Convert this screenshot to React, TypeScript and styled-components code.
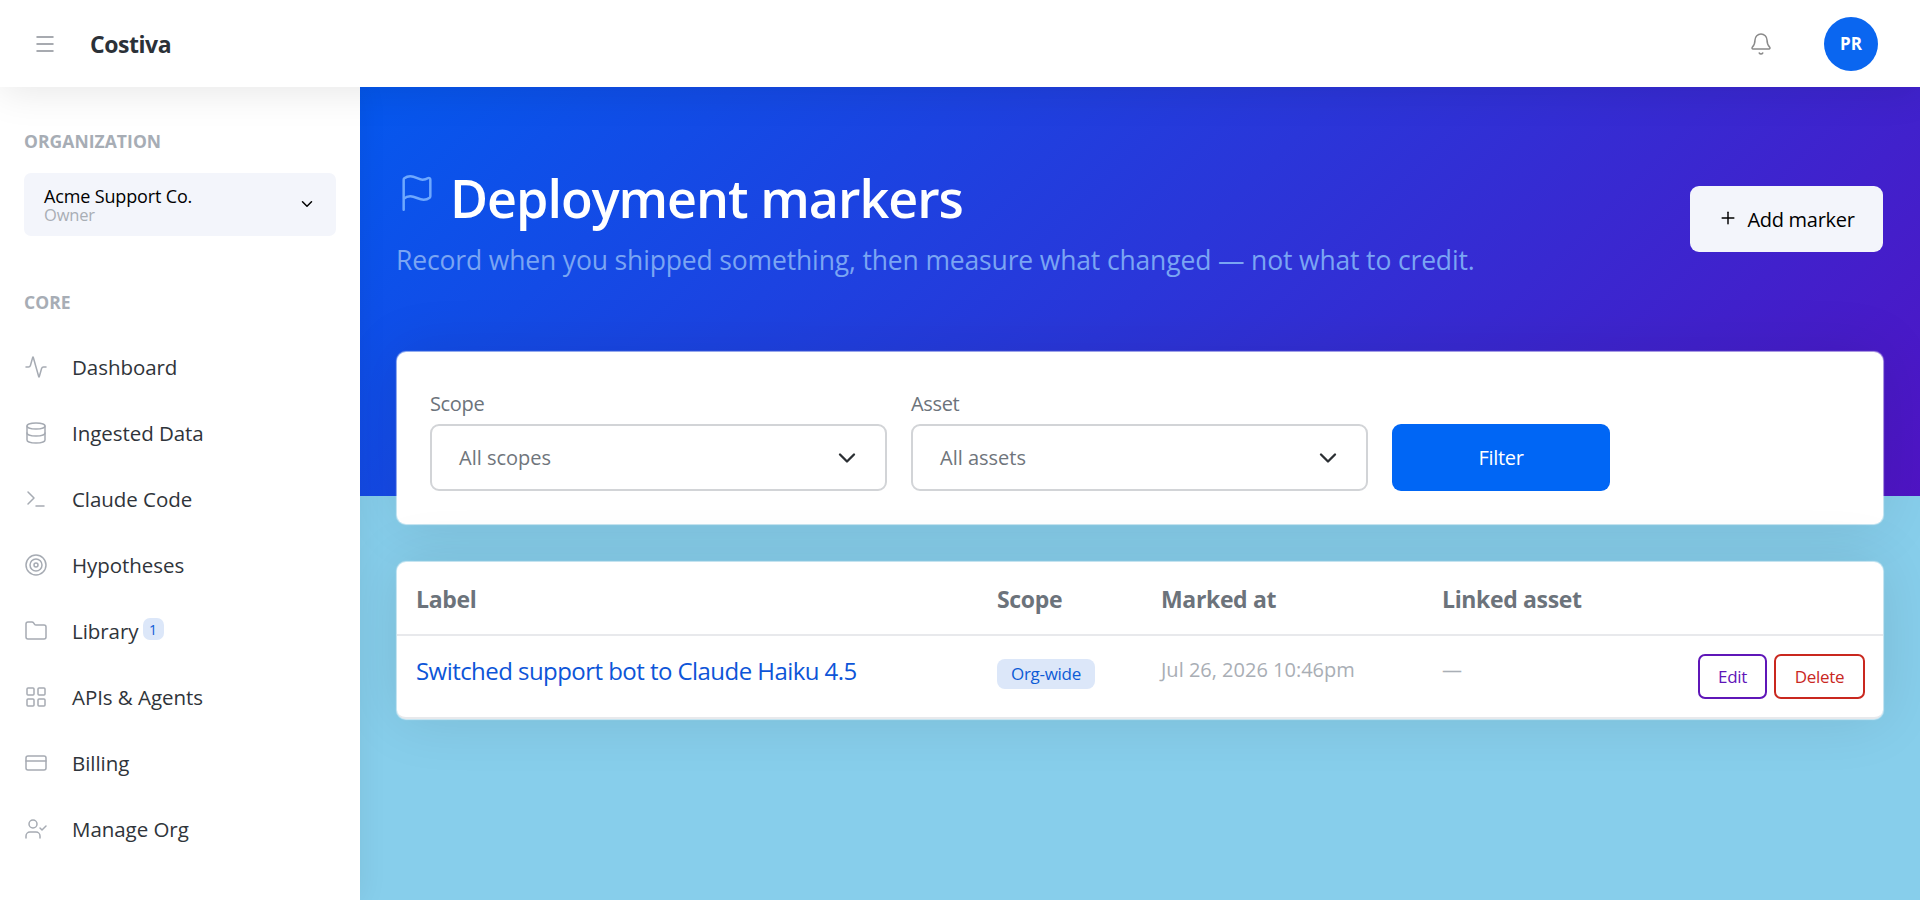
import React from "react";
import styled, { createGlobalStyle } from "styled-components";
import { Activity, Bell, ChevronDown, CreditCard, Database, Flag, Folder, LayoutGrid, Menu, Plus, Target, Terminal, UserCheck } from "lucide-react";

const Global = createGlobalStyle`
  html, body { margin: 0; padding: 0; height: 900px; overflow: hidden; background: #87ceeb; }
  * { box-sizing: border-box; }
  body { font-family: "Open Sans", "Noto Sans", sans-serif; color: #212529; }
`;

const Page = styled.div`display: flex; flex-direction: column; height: 900px;`;
const Topbar = styled.header`
  height: 87px; flex: none; background: #fff; display: flex; align-items: center;
  padding: 0 5px 0 33px; position: relative; z-index: 3;
  box-shadow: 0 4px 40px rgba(0,0,0,.1);
`;
const MenuButton = styled.span`display: flex; color: #8a8f96; width: 57px;`;
const Brand = styled.span`font-size: 23px; font-weight: 700; color: #2b3138; letter-spacing: -.45px; flex: 1;`;
const BellWrap = styled.span`display: flex; color: #8a8a8a; margin-right: 51px;`;
const Avatar = styled.span`
  width: 54px; height: 54px; border-radius: 50%; background: #0a66f0; color: #fff; margin-right: 37px;
  display: flex; align-items: center; justify-content: center; font-size: 17px; font-weight: 700;
`;
const Body = styled.div`display: flex; flex: 1; min-height: 0;`;
const Sidebar = styled.aside`
  width: 360px; flex: none; background: #fff; padding: 43px 24px 0; position: relative; z-index: 2;
  box-shadow: 0 0 28px rgba(0,0,0,.07);
`;
const SectionTitle = styled.div`
  font-size: 17.5px; font-weight: 700; color: #a7adb5; line-height: 22px; letter-spacing: .05px;
`;
const OrgBox = styled.div`
  margin-top: 21px; height: 63px; background: #f3f5fb; border-radius: 7px; padding: 15px 20px;
  display: flex; align-items: center; justify-content: space-between; margin-bottom: 55px;
`;
const OrgText = styled.div`display: flex; flex-direction: column; margin-top: 2px;`;
const OrgName = styled.span`font-size: 18px; font-weight: 500; color: #000; line-height: 19px; letter-spacing: -.15px;`;
const OrgRole = styled.span`font-size: 16.5px; color: #a9aeb5; line-height: 18px; letter-spacing: -.2px;`;
const OrgChevron = styled.span`display: flex; color: #000; margin-top: -2px;`;
const Nav = styled.nav`display: flex; flex-direction: column; margin-top: 21px;`;
const NavItem = styled.a`
  height: 66px; display: flex; align-items: center; color: #2f343a; font-size: 20.5px; letter-spacing: -.05px;
`;
const NavIcon = styled.span`display: flex; width: 48px; color: #a6abb3; flex: none;`;
const Badge = styled.span`
  width: 21px; height: 22px; margin: -4px 0 0 4px; border-radius: 7px; background: #dce7f9; color: #0d5bd6;
  display: flex; align-items: center; justify-content: center; font-size: 14px; letter-spacing: 0;
`;
const Main = styled.main`flex: 1; min-width: 0; display: flex; flex-direction: column; background: #87ceeb;`;
const Hero = styled.section`
  height: 409px; flex: none; background: linear-gradient(135deg, #0558ee 0%, #4f14c4 100%);
  display: flex; justify-content: space-between; padding: 76px 37px 0;
`;
const HeroText = styled.div`display: flex; flex-direction: column;`;
const TitleRow = styled.div`display: flex; align-items: flex-start;`;
const FlagIcon = styled.span`display: flex; color: #6ea8fe; margin-right: 13px; margin-top: 10px;`;
const Title = styled.h1`margin: 0; font-size: 52px; line-height: 70px; font-weight: 600; color: #fff; letter-spacing: -1px;`;
const Subtitle = styled.p`margin: 9px 0 0 -1px; font-size: 26.5px; line-height: 36px; color: #7aa5f3; letter-spacing: -.15px; white-space: nowrap;`;
const AddButton = styled.button`
  margin-top: 23px; width: 193px; height: 66px; border: 0; border-radius: 9px; background: #f3f5fb; color: #000;
  font: 400 20px "Open Sans", sans-serif; letter-spacing: -.3px; display: flex; align-items: center; justify-content: center; gap: 9px;
  svg { margin-top: -3px; }
`;
const Content = styled.div`margin-top: -144px; padding: 0 37px; display: flex; flex-direction: column; gap: 38px;`;
const Card = styled.div`
  background: #fff; border-radius: 9px; box-shadow: 0 0 1px 1px rgba(255,255,255,.6), 0 0 60px rgba(0,0,0,.1);
`;
const FilterCard = styled(Card)`height: 172px; padding: 36px 33px 33px; display: flex; align-items: flex-end; gap: 24px;`;
const Field = styled.label`display: flex; flex-direction: column; width: 457px;`;
const FieldLabel = styled.span`font-size: 20px; line-height: 36px; color: #6c737b; letter-spacing: -.35px; margin-top: -2px; padding-bottom: 2px;`;
const Select = styled.div`
  height: 67px; border: 2px solid #d2d4d7; border-radius: 9px; display: flex; align-items: center; justify-content: space-between;
  padding: 0 24px 0 27px; font-size: 20px; color: #6f757c; letter-spacing: 0; background: #fff;
`;
const FilterButton = styled.button`
  width: 218px; height: 67px; border: 0; border-radius: 9px; background: #0066f5; color: #fff;
  font: 500 20px "Open Sans", sans-serif; letter-spacing: -.3px;
`;
const TableCard = styled(Card)`height: 157px; border-bottom: 2px solid #e8e9ec;`;
const Row = styled.div<{ $head?: boolean }>`
  display: grid; grid-template-columns: 581px 164px 281px 1fr auto; align-items: center; padding: 0 18px 0 19px;
  height: ${p => (p.$head ? "74px" : "81px")};
  ${p => (p.$head ? "border-bottom: 2px solid #e8e9ec;" : "")}
`;
const Head = styled.span`font-size: 23px; font-weight: 700; color: #6c737b; letter-spacing: -.35px; margin-top: 1px;`;
const LabelLink = styled.a`font-size: 24px; color: #0d55d8; letter-spacing: -.55px; white-space: nowrap; margin-top: -12px;`;
const Pill = styled.span`
  justify-self: start; width: 98px; height: 30px; border-radius: 8px; background: #dce7f9; color: #0d5bd6; margin-top: -6px;
  display: flex; align-items: center; justify-content: center; font-size: 17px; letter-spacing: -.3px; white-space: nowrap;
`;
const Muted = styled.span`font-size: 20px; color: #a9aeb5; letter-spacing: 0; margin-top: -14px; white-space: nowrap;`;
const Actions = styled.div`display: flex; gap: 7px;`;
const ActionBtn = styled.button<{ $color: string; $w: number }>`
  height: 45px; width: ${p => p.$w}px; background: #fff; border: 2px solid ${p => p.$color}; color: ${p => p.$color};
  border-radius: 7px; font: 400 17px "Open Sans", sans-serif; letter-spacing: -.3px; padding: 0;
`;

const navItems = [
  { icon: <Activity size={24} strokeWidth={1.5} />, label: "Dashboard" },
  { icon: <Database size={24} strokeWidth={1.5} />, label: "Ingested Data" },
  { icon: <Terminal size={24} strokeWidth={1.5} />, label: "Claude Code" },
  { icon: <Target size={24} strokeWidth={1.5} />, label: "Hypotheses" },
  { icon: <Folder size={24} strokeWidth={1.5} />, label: "Library", badge: "1" },
  { icon: <LayoutGrid size={24} strokeWidth={1.5} />, label: "APIs & Agents" },
  { icon: <CreditCard size={24} strokeWidth={1.5} />, label: "Billing" },
  { icon: <UserCheck size={24} strokeWidth={1.5} />, label: "Manage Org" },
];

export default function App() {
  return (
    <>
      <Global />
      <Page>
        <Topbar>
          <MenuButton><Menu size={24} strokeWidth={1.5} /></MenuButton>
          <Brand>Costiva</Brand>
          <BellWrap><Bell size={24} strokeWidth={1.5} /></BellWrap>
          <Avatar>PR</Avatar>
        </Topbar>
        <Body>
          <Sidebar>
            <SectionTitle>ORGANIZATION</SectionTitle>
            <OrgBox>
              <OrgText>
                <OrgName>Acme Support Co.</OrgName>
                <OrgRole>Owner</OrgRole>
              </OrgText>
              <OrgChevron><ChevronDown size={18} strokeWidth={2} /></OrgChevron>
            </OrgBox>
            <SectionTitle>CORE</SectionTitle>
            <Nav>
              {navItems.map(n => (
                <NavItem key={n.label}>
                  <NavIcon>{n.icon}</NavIcon>
                  {n.label}
                  {n.badge && <Badge>{n.badge}</Badge>}
                </NavItem>
              ))}
            </Nav>
          </Sidebar>
          <Main>
            <Hero>
              <HeroText>
                <TitleRow>
                  <FlagIcon><Flag size={40} strokeWidth={1.5} /></FlagIcon>
                  <Title>Deployment markers</Title>
                </TitleRow>
                <Subtitle>Record when you shipped something, then measure what changed — not what to credit.</Subtitle>
              </HeroText>
              <AddButton><Plus size={20} strokeWidth={1.75} />Add marker</AddButton>
            </Hero>
            <Content>
              <FilterCard>
                <Field>
                  <FieldLabel>Scope</FieldLabel>
                  <Select>All scopes<ChevronDown size={28} strokeWidth={2} color="#2b2f33" /></Select>
                </Field>
                <Field>
                  <FieldLabel>Asset</FieldLabel>
                  <Select>All assets<ChevronDown size={28} strokeWidth={2} color="#2b2f33" /></Select>
                </Field>
                <FilterButton>Filter</FilterButton>
              </FilterCard>
              <TableCard>
                <Row $head>
                  <Head>Label</Head>
                  <Head>Scope</Head>
                  <Head>Marked at</Head>
                  <Head>Linked asset</Head>
                  <span />
                </Row>
                <Row>
                  <LabelLink>Switched support bot to Claude Haiku 4.5</LabelLink>
                  <Pill>Org-wide</Pill>
                  <Muted>Jul 26, 2026 10:46pm</Muted>
                  <Muted>—</Muted>
                  <Actions>
                    <ActionBtn $color="#5f16b8" $w={69}>Edit</ActionBtn>
                    <ActionBtn $color="#c9281f" $w={91}>Delete</ActionBtn>
                  </Actions>
                </Row>
              </TableCard>
            </Content>
          </Main>
        </Body>
      </Page>
    </>
  );
}
